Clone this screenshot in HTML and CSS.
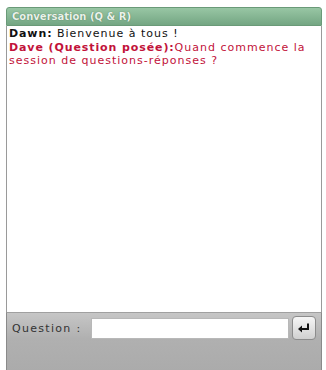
FILE: index.html
```html
<!DOCTYPE html>
<html>
<head>
<meta charset="utf-8">
<link rel="stylesheet" href="styles.css">
</head>
<body>
<div class="panel">
  <div class="header">Conversation (Q &amp; R)</div>
  <div class="log">
    <div class="msg"><b class="who">Dawn:</b> Bienvenue à tous !</div>
    <div class="msg q"><b class="who">Dave (Question posée):</b>Quand commence la session de questions-réponses ?</div>
  </div>
  <div class="footer">
    <div class="row">
      <span class="label">Question :</span>
      <span class="input"></span>
      <span class="send"><svg width="14" height="12" viewBox="0 0 14 12"><path d="M11 1.5V7H3.5" fill="none" stroke="#111" stroke-width="2"/><path d="M1 7L5 3.5V10.5Z" fill="#111"/></svg></span>
    </div>
  </div>
</div>
</body>
</html>
```
FILE: styles.css
```css
html, body { margin: 0; padding: 0; background: #fff; }
body { font-family: "DejaVu Sans", Verdana, sans-serif; font-size: 11px; }
.panel {
  margin: 7px 0 0 6px;
  width: 316px;
  height: 370px;
  display: flex;
  flex-direction: column;
  box-sizing: border-box;
}
.header {
  height: 19px;
  box-sizing: border-box;
  background: linear-gradient(#98c6a4, #74a683);
  border: 1px solid #6a9a78;
  border-radius: 3px 3px 0 0;
  color: #eaf2ea;
  font-weight: bold;
  font-size: 10px;
  line-height: 17px;
  padding-left: 5px;
  text-shadow: 0 0 1px #3f6a4c;
}
.log {
  height: 286px;
  box-sizing: border-box;
  border-left: 1px solid #9a9a9a;
  border-right: 1px solid #9a9a9a;
  padding: 1px 3px 0 2px;
  line-height: 13.5px;
  color: #111;
  letter-spacing: 1px;
}
.msg .who { font-weight: bold; letter-spacing: 0.9px; }
.q { color: #c2123a; }
.footer {
  flex: 1;
  background: linear-gradient(#c6c6c6, #b0b0b0 40%, #aaaaaa);
  border-left: 1px solid #8a8a8a;
  border-right: 1px solid #8a8a8a;
  border-top: 1px solid #a0a0a0;
}
.row {
  display: flex;
  align-items: center;
  padding: 3px 5px 0 5px;
  height: 24px;
}
.label {
  color: #333;
  letter-spacing: 1.3px;
  width: 79px;
}
.input {
  width: 199px;
  height: 21px;
  background: #fff;
  box-sizing: border-box;
  border: 1px solid #b8b8b8;
}
.send {
  margin-left: 3px;
  width: 24px;
  height: 24px;
  box-sizing: border-box;
  border: 1px solid #8c8c8c;
  border-radius: 4px;
  background: linear-gradient(#f6f6f6, #d0d0d0);
  display: flex;
  align-items: center;
  justify-content: center;
}
```
